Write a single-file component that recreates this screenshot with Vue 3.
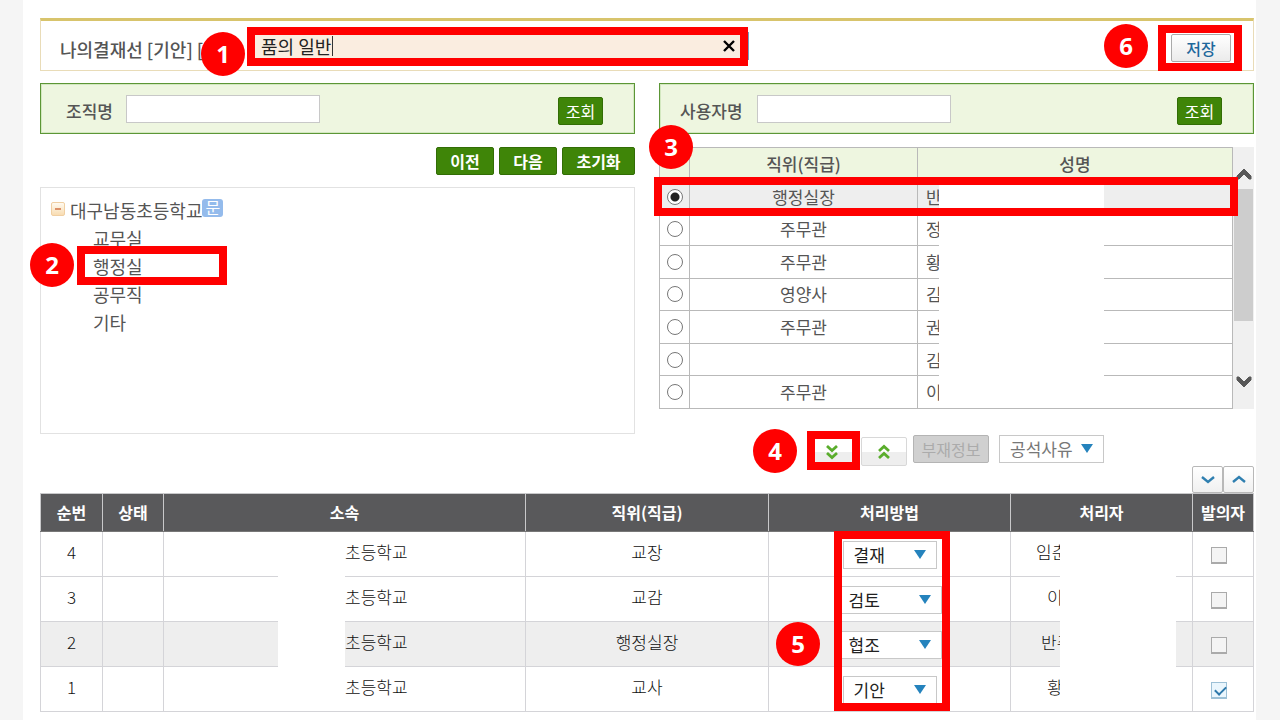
<script setup>
import { ref } from 'vue'

const lineName = ref('품의 일반')
const orgName = ref('')
const userName = ref('')
const selectedUser = ref(0)
const vacancy = ref('공석사유')

const departments = ['교무실', '행정실', '공무직', '기타']

const users = [
  { position: '행정실장', name: '반' },
  { position: '주무관', name: '정' },
  { position: '주무관', name: '황' },
  { position: '영양사', name: '김' },
  { position: '주무관', name: '권' },
  { position: '', name: '김' },
  { position: '주무관', name: '이' },
]

const methods = ['결재', '검토', '협조', '기안']

const approvers = ref([
  { order: 4, org: '초등학교', position: '교장', method: '결재', name: '임춘', start: 25, wide: false, initiator: false },
  { order: 3, org: '초등학교', position: '교감', method: '검토', name: '이', start: 36, wide: true, initiator: false },
  { order: 2, org: '초등학교', position: '행정실장', method: '협조', name: '반주', start: 30, wide: true, initiator: false, active: true },
  { order: 1, org: '초등학교', position: '교사', method: '기안', name: '황', start: 36, wide: false, initiator: true },
])
</script>

<template>
  <main class="page">
    <header class="title-bar">
      <label class="title-label" for="line-name">나의결재선 [기안] [</label>
      <div class="name-field">
        <input id="line-name" v-model="lineName" type="text" />
        <span class="caret"></span>
        <button class="clear" type="button" aria-label="지우기">
          <svg viewBox="0 0 14 14" width="14" height="14"><path d="M2 2 L12 12 M12 2 L2 12" fill="none" stroke="#000" stroke-width="2.4" /></svg>
        </button>
        <span class="frame frame-name"></span>
        <span class="step step-1">1</span>
      </div>
      <div class="save-area">
        <button class="save" type="button">저장</button>
        <span class="frame frame-save"></span>
        <span class="step step-6">6</span>
      </div>
    </header>

    <div class="columns">
      <section class="left">
        <form class="search" @submit.prevent>
          <label for="org">조직명</label>
          <input id="org" v-model="orgName" type="text" />
          <button class="green find" type="submit">조회</button>
        </form>
        <div class="nav">
          <button class="green" type="button">이전</button>
          <button class="green" type="button">다음</button>
          <button class="green reset" type="button">초기화</button>
        </div>
        <div class="tree">
          <div class="root">
            <button class="toggle" type="button" aria-label="접기"></button>
            <a href="#">대구남동초등학교</a>
            <span class="badge">문</span>
          </div>
          <ul>
            <li v-for="(dept, i) in departments" :key="dept">
              <a href="#">{{ dept }}</a>
              <template v-if="i === 1">
                <span class="frame frame-dept"></span>
                <span class="step step-2">2</span>
              </template>
            </li>
          </ul>
        </div>
      </section>

      <section class="right">
        <form class="search user-search" @submit.prevent>
          <label for="user">사용자명</label>
          <input id="user" v-model="userName" type="text" />
          <button class="green find" type="submit">조회</button>
        </form>
        <div class="user-list">
          <table class="users">
            <colgroup><col class="u-radio" /><col class="u-position" /><col /></colgroup>
            <thead>
              <tr><th></th><th>직위(직급)</th><th>성명</th></tr>
            </thead>
            <tbody>
              <tr v-for="(user, i) in users" :key="i" :class="{ selected: selectedUser === i }">
                <td><input v-model="selectedUser" type="radio" name="user" :value="i" :aria-label="user.position + ' ' + user.name" /></td>
                <td>{{ user.position }}</td>
                <td class="user-name">{{ user.name }}</td>
              </tr>
            </tbody>
          </table>
          <span class="mask mask-users"></span>
          <div class="scrollbar">
            <svg class="up" viewBox="0 0 16 12" width="16" height="12"><path d="M1 11 V8 L8 1 L15 8 V11 L13 11 L8 6 L3 11 Z" fill="#585858" stroke="#585858" /></svg>
            <span class="thumb"></span>
            <svg class="down" viewBox="0 0 16 12" width="16" height="12"><path d="M1 1 V4 L8 11 L15 4 V1 L13 1 L8 6 L3 1 Z" fill="#585858" stroke="#585858" /></svg>
          </div>
          <span class="frame frame-user"></span>
          <span class="step step-3">3</span>
        </div>
      </section>
    </div>

    <div class="toolbar">
      <div class="add-area">
        <button class="pale" type="button" aria-label="추가">
          <svg viewBox="0 0 14 16" width="14" height="16"><path d="M2 2 L7 6.5 L12 2 M2 9 L7 13.5 L12 9" fill="none" stroke="#5aad2c" stroke-width="2.8" /></svg>
        </button>
        <span class="frame frame-add"></span>
        <span class="step step-4">4</span>
      </div>
      <button class="pale" type="button" aria-label="제거">
        <svg viewBox="0 0 14 16" width="14" height="16"><path d="M2 7 L7 2.5 L12 7 M2 14 L7 9.5 L12 14" fill="none" stroke="#5aad2c" stroke-width="2.8" /></svg>
      </button>
      <button class="absence" type="button" disabled>부재정보</button>
      <div class="drop vacancy">
        <select v-model="vacancy" aria-label="공석사유"><option>공석사유</option></select>
        <svg viewBox="0 0 12 10" width="12" height="10"><path d="M0 0 H12 L6 9 Z" fill="#2583bd" /></svg>
      </div>
    </div>

    <div class="order-buttons">
      <button type="button" aria-label="아래로">
        <svg viewBox="0 0 14 10" width="14" height="10"><path d="M1 2 L7 7 L13 2" fill="none" stroke="#2f7fb0" stroke-width="2.4" /></svg>
      </button>
      <button type="button" aria-label="위로">
        <svg viewBox="0 0 14 10" width="14" height="10"><path d="M1 7 L7 2 L13 7" fill="none" stroke="#2f7fb0" stroke-width="2.4" /></svg>
      </button>
    </div>

    <div class="line">
      <table class="approvers">
        <colgroup>
          <col class="c-order" /><col class="c-state" /><col class="c-org" /><col class="c-position" /><col class="c-method" /><col class="c-name" /><col class="c-check" />
        </colgroup>
        <thead>
          <tr>
            <th>순번</th><th>상태</th><th>소속</th><th>직위(직급)</th><th>처리방법</th><th>처리자</th><th>발의자</th>
          </tr>
        </thead>
        <tbody>
          <tr v-for="row in approvers" :key="row.order" :class="{ selected: row.active }">
            <td>{{ row.order }}</td>
            <td></td>
            <td class="org">{{ row.org }}</td>
            <td>{{ row.position }}</td>
            <td class="method">
              <div class="drop" :class="{ wide: row.wide }">
                <select v-model="row.method" :aria-label="row.position + ' 처리방법'">
                  <option v-for="m in methods" :key="m">{{ m }}</option>
                </select>
                <svg viewBox="0 0 12 10" width="12" height="10"><path d="M0 0 H12 L6 9 Z" fill="#2583bd" /></svg>
              </div>
            </td>
            <td class="handler" :style="{ paddingLeft: row.start + 'px' }">{{ row.name }}</td>
            <td class="check"><input v-model="row.initiator" type="checkbox" :aria-label="row.position + ' 발의자'" /></td>
          </tr>
        </tbody>
      </table>
      <span class="mask mask-org"></span>
      <span class="mask mask-handler"></span>
      <span class="frame frame-method"></span>
      <span class="step step-5">5</span>
    </div>
  </main>
</template>

<style>
body {
  background: #f5f5f5;
}
</style>

<style scoped>
* {
  box-sizing: border-box;
}

.page {
  min-height: 100vh;
  margin: 0 24px 0 23px;
  padding: 18px 2px 8px 17px;
  background: #fff;
  font-family: "Noto Sans CJK KR", sans-serif;
  font-size: 17px;
  line-height: 24px;
  color: #555;
}

button,
input,
select {
  margin: 0;
  padding: 0;
  font-family: inherit;
  font-size: 16px;
  line-height: 24px;
}

a {
  color: inherit;
  text-decoration: none;
}

svg {
  display: block;
}

/* numbered guide marks */
.frame {
  position: absolute;
  z-index: 2;
  border: 8px solid #f00;
  pointer-events: none;
}

.step {
  position: absolute;
  z-index: 3;
  width: 44px;
  height: 44px;
  border-radius: 50%;
  background: #f00;
  color: #fff;
  font-family: "Noto Sans", "Noto Sans CJK KR", sans-serif;
  font-size: 24px;
  font-weight: 700;
  line-height: 44px;
  text-align: center;
}

.mask {
  position: absolute;
  z-index: 1;
  background: #fff;
}

/* title bar */
.title-bar {
  display: flex;
  align-items: center;
  height: 53px;
  padding: 0 22px 0 19px;
  border: 1px solid #e9dcb8;
  border-top: 3px solid #d8c46c;
}

.title-label {
  width: 187px;
  padding-top: 6px;
  font-size: 18px;
  font-weight: 500;
  white-space: nowrap;
}

.name-field {
  position: relative;
  width: 502px;
}

.name-field input {
  display: block;
  width: 100%;
  height: 28px;
  padding: 0 32px 0 13px;
  border: 1px solid #6fa0c8;
  background: #faede0;
  color: #222;
  font-size: 18px;
  outline: none;
}

.caret {
  position: absolute;
  left: 85px;
  top: 4px;
  width: 1px;
  height: 20px;
  background: #333;
}

.clear {
  position: absolute;
  right: 13px;
  top: 7px;
  border: 0;
  background: none;
}

.frame-name {
  inset: -5px 1px -6px 0;
}

.step-1 {
  left: -46px;
  top: 0;
}

.save-area {
  position: relative;
  margin-left: auto;
  padding-top: 4px;
}

.save {
  display: block;
  width: 60px;
  height: 28px;
  border: 1px solid #aaa;
  border-radius: 2px;
  background: linear-gradient(#fff, #ebebeb);
  color: #1f689c;
  font-weight: 500;
}

.frame-save {
  inset: -5px -11px -9px -13px;
}

.step-6 {
  left: -67px;
  top: -6px;
}

/* two columns */
.columns {
  display: grid;
  grid-template-columns: 1fr 1fr;
  gap: 24px;
  margin-top: 12px;
}

.search {
  display: flex;
  align-items: center;
  height: 51px;
  padding: 0 31px 0 25px;
  border: 1px solid #5c9636;
  box-shadow: inset 0 0 0 1px #d3e8c0;
  background: #eef6e0;
}

.search label {
  width: 60px;
  padding-top: 4px;
  font-weight: 500;
}

.user-search {
  padding-left: 20px;
}

.user-search label {
  width: 77px;
}

.search input {
  width: 194px;
  height: 28px;
  padding: 0 6px;
  border: 1px solid #c8c8c8;
  background: #fff;
}

.green {
  width: 58px;
  height: 28px;
  border: 1px solid #326d05;
  border-radius: 2px;
  background: #3f8508;
  color: #fff;
  font-weight: 700;
}

.find {
  width: 45px;
  margin-left: auto;
  margin-top: 4px;
  font-weight: 400;
}

.nav {
  display: flex;
  justify-content: flex-end;
  gap: 5px;
  margin-top: 13px;
}

.reset {
  width: 73px;
}

.tree {
  height: 247px;
  margin-top: 12px;
  padding: 8px 10px;
  border: 1px solid #e2e2e2;
  font-size: 18px;
}

.root {
  display: flex;
  align-items: center;
  height: 28px;
}

.toggle {
  position: relative;
  width: 14px;
  height: 14px;
  margin: 0 5px 2px 0;
  border: 1px solid #f0cfa2;
  border-radius: 2px;
  background: linear-gradient(#fffaf0, #f8dcb2);
}

.toggle::after {
  content: "";
  position: absolute;
  left: 3px;
  top: 5px;
  width: 6px;
  height: 2px;
  background: #dc9068;
}

.badge {
  width: 21px;
  height: 18px;
  margin-bottom: 4px;
  border-radius: 3px;
  background: #94bbec;
  color: #fff;
  font-size: 16px;
  line-height: 17px;
  text-align: center;
}

.tree ul {
  margin: 0;
  padding: 0 0 0 42px;
  list-style: none;
}

.tree li {
  position: relative;
  height: 28px;
  line-height: 28px;
}

.frame-dept {
  left: -16px;
  top: -6px;
  width: 150px;
  height: 39px;
}

.step-2 {
  left: -63px;
  top: -9px;
}

/* user list */
.user-list {
  position: relative;
  display: flex;
  height: 262px;
  margin-top: 13px;
}

.users {
  flex: 1;
  height: 262px;
  border-collapse: collapse;
  table-layout: fixed;
}

.u-radio {
  width: 30px;
}

.u-position {
  width: 228px;
}

.users th,
.users td {
  padding: 0;
  border: 1px solid #b9b9b9;
  text-align: center;
  font-weight: 400;
}

.users th {
  height: 33px;
  background: #eef6e0;
  font-weight: 500;
}

.users .user-name {
  padding-left: 8px;
  text-align: left;
}

.selected td {
  background: #eee;
}

.users input {
  display: block;
  appearance: none;
  width: 16px;
  height: 16px;
  margin: 0 auto;
  border: 1px solid #777;
  border-radius: 50%;
  background: #fff;
}

.users input:checked {
  background: radial-gradient(circle, #222 0 4px, #fff 5px);
}

.mask-users {
  left: 280px;
  top: 38px;
  bottom: 2px;
  width: 165px;
}

.scrollbar {
  display: flex;
  flex-direction: column;
  align-items: center;
  width: 21px;
  padding: 21px 0;
  background: #f0f0f0;
}

.thumb {
  width: 19px;
  height: 132px;
  margin-top: 9px;
  background: #cdcdcd;
}

.down {
  margin-top: auto;
}

.frame-user {
  inset: 30px 16px auto -5px;
  height: 39px;
}

.step-3 {
  left: -10px;
  top: -22px;
}

/* toolbar */
.toolbar {
  display: flex;
  gap: 6px;
  justify-content: flex-end;
  height: 31px;
  margin-top: 1px;
  padding-right: 150px;
}

.add-area {
  position: relative;
}

.pale {
  display: grid;
  place-items: center;
  width: 46px;
  height: 29px;
  margin-top: 2px;
  border: 1px solid #d8d8d8;
  border-radius: 2px;
  background: linear-gradient(#fff 50%, #eee 50%);
}

.frame-add {
  inset: -4px -5px -4px -2px;
}

.step-4 {
  left: -56px;
  top: -6px;
}

.absence {
  width: 76px;
  height: 28px;
  border: 1px solid #b4b4b4;
  border-radius: 2px;
  background: #d0d0d0;
  color: #ababab;
}

.drop {
  position: relative;
  width: 94px;
  height: 28px;
}

.drop select {
  display: block;
  appearance: none;
  width: 100%;
  height: 100%;
  padding: 0 0 0 10px;
  border: 1px solid #c8c8c8;
  border-radius: 0;
  background: #fff;
  color: #222;
  font-size: 17px;
}

.drop svg {
  position: absolute;
  right: 11px;
  top: 9px;
  pointer-events: none;
}

.vacancy {
  width: 105px;
  margin-left: 4px;
}

.vacancy select {
  color: #777;
}

.order-buttons {
  display: flex;
  justify-content: flex-end;
}

.order-buttons button {
  display: grid;
  place-items: center;
  width: 31px;
  height: 27px;
  border: 1px solid #b8b8b8;
  border-radius: 2px;
  background: linear-gradient(#fff, #f0f0f0);
}

/* approval line */
.line {
  position: relative;
}

.approvers {
  width: 100%;
  border-collapse: collapse;
  table-layout: fixed;
  color: #111;
}

.c-order { width: 62px; }
.c-state { width: 61px; }
.c-position { width: 243px; }
.c-method { width: 242px; }
.c-name { width: 182px; }
.c-check { width: 61px; }

.approvers th {
  height: 38px;
  padding: 0 0 2px;
  border: 1px solid #c8c8ca;
  border-bottom-color: #777;
  background: #59595b;
  color: #fff;
  font-size: 16px;
  font-weight: 700;
}

.approvers td {
  height: 45px;
  padding: 0 0 5px;
  border: 1px solid #d4d4d8;
  font-weight: 300;
  text-align: center;
}

.approvers .org {
  padding-left: 181px;
  text-align: left;
}

.approvers .handler {
  text-align: left;
}

.approvers .method,
.approvers .check {
  padding: 2px 0 0;
}

.approvers .drop {
  margin: 0 auto;
}

.approvers .wide {
  width: 104px;
}

.check input {
  display: block;
  appearance: none;
  position: relative;
  width: 16px;
  height: 17px;
  margin: 0 0 0 18px;
  border: 1px solid #aaa;
  border-bottom-width: 2px;
  background: #f4f4f4;
}

.check input:checked {
  border-color: #9cc0d6;
  background: #eaf6fd;
}

.check input:checked::after {
  content: "";
  position: absolute;
  left: 3px;
  top: 3px;
  width: 9px;
  height: 5px;
  border-left: 2px solid #2d78ab;
  border-bottom: 2px solid #2d78ab;
  transform: rotate(-45deg);
}

.mask-org {
  left: 238px;
  top: 42px;
  bottom: 1px;
  width: 67px;
}

.mask-handler {
  right: 78px;
  top: 42px;
  bottom: 1px;
  width: 116px;
}

.frame-method {
  right: 304px;
  top: 38px;
  bottom: 1px;
  width: 116px;
}

.step-5 {
  right: 434px;
  top: 129px;
}
</style>
